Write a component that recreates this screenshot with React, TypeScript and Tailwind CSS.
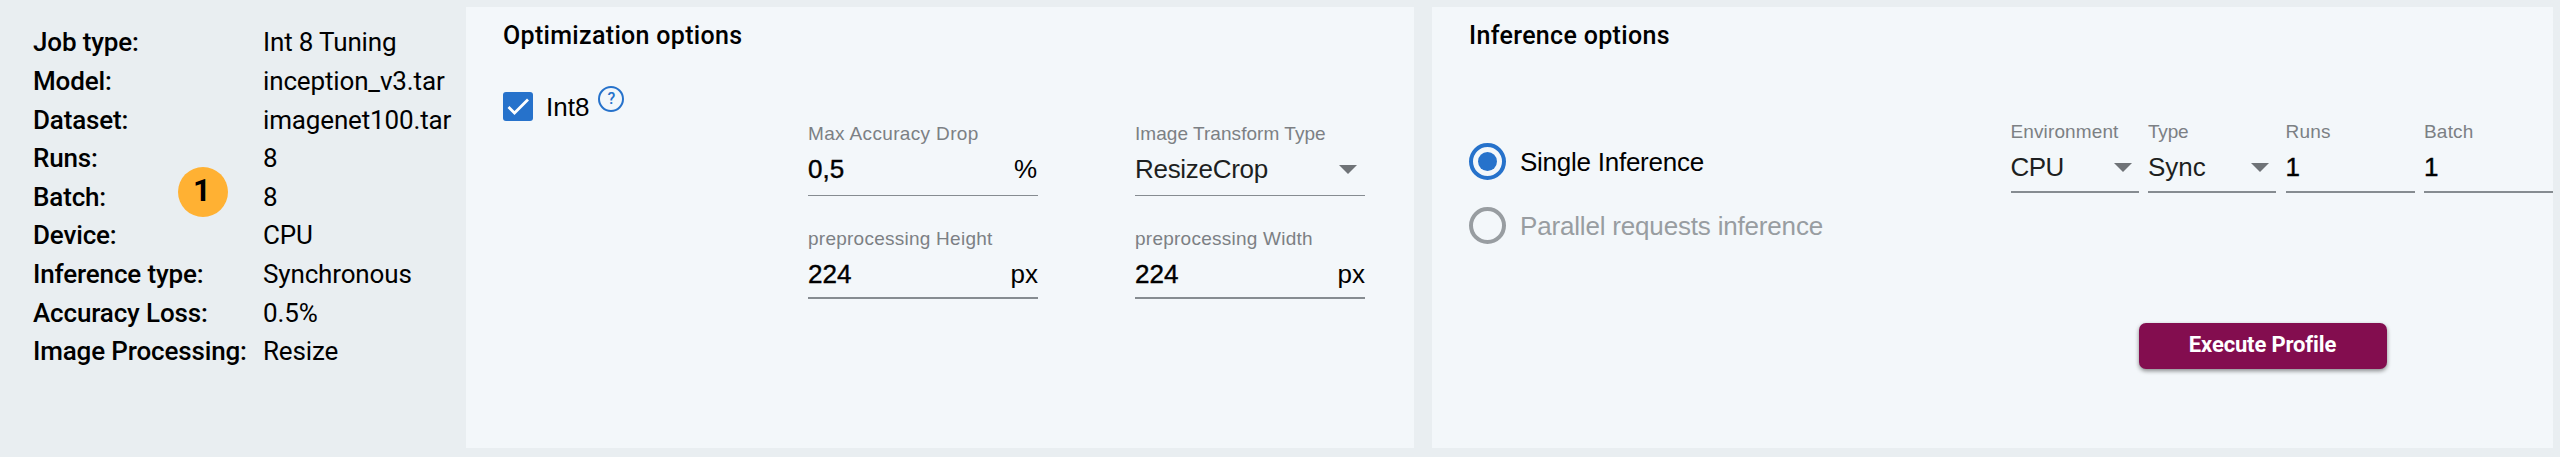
import React from "react";

const job: [string, string][] = [
  ["Job type:", "Int 8 Tuning"],
  ["Model:", "inception_v3.tar"],
  ["Dataset:", "imagenet100.tar"],
  ["Runs:", "8"],
  ["Batch:", "8"],
  ["Device:", "CPU"],
  ["Inference type:", "Synchronous"],
  ["Accuracy Loss:", "0.5%"],
  ["Image Processing:", "Resize"],
];

function Arrow({ className }: { className: string }) {
  return (
    <svg className={className} width="18" height="9" viewBox="0 0 18 9">
      <path d="M0 0H18L9 9Z" fill="#6f7377" />
    </svg>
  );
}

function Field({ label, value, suffix, select, className, labelClass, valueClass = "", suffixClass = "", arrow }: {
  label: string;
  value: string;
  suffix?: string;
  select?: boolean;
  className: string;
  labelClass: string;
  valueClass?: string;
  suffixClass?: string;
  arrow?: string;
}) {
  return (
    <label className={`flex flex-col border-[#868c91] ${className}`}>
      <span className={`h-6 whitespace-nowrap text-[19px] leading-6 text-[#7c8084] ${labelClass}`}>{label}</span>
      <span className={`mt-[8px] flex h-[30px] items-center justify-between text-[26px] leading-[30px] ${select ? "text-[#1d1f21]" : "text-black"}`}>
        <span className={`${select ? "" : "[-webkit-text-stroke:0.4px_black]"} ${valueClass}`}>{value}</span>
        {suffix && <span className={suffixClass}>{suffix}</span>}
        {select && <Arrow className={arrow ?? "mr-2"} />}
      </span>
    </label>
  );
}

export default function App() {
  return (
    <div className="flex h-[457px] w-[2560px] overflow-hidden bg-[#e9eef1] font-['Liberation_Sans',Arial,sans-serif] text-black">
      <aside className="relative w-[466px] shrink-0 pl-[33px] pt-[23.4px] font-[Roboto,sans-serif] text-[26px]">
        <dl>
          {job.map(([k, v]) => (
            <div key={k} className="flex h-[38.6px] items-center whitespace-nowrap leading-[38.6px]">
              <dt className="w-[230px] font-medium tracking-[-0.15px]">{k}</dt>
              <dd className="tracking-[-0.15px]">{v}</dd>
            </div>
          ))}
        </dl>
        <span className="absolute left-[178px] top-[167px] flex size-[50px] items-center justify-center rounded-full bg-[#ffb133] pb-px pr-[2px] text-[31px] font-bold">
          1
        </span>
      </aside>

      <section className="mt-[7px] h-[441px] w-[948px] shrink-0 bg-[#f3f7fa] pl-[37px] pt-[13px]">
        <h2 className="h-8 font-[Roboto,sans-serif] text-[25px] font-medium leading-8 tracking-[0.32px]">Optimization options</h2>
        <div className="flex">
          <div className="flex w-[305px] pt-[34px]">
            <span className="mt-[6px] flex h-[29px] w-[30px] items-center justify-center rounded-[3px] bg-[#2672cb]">
              <svg width="30" height="29" viewBox="0 0 30 29" fill="none">
                <path d="M5.5 15L11.5 21L25 7.5" stroke="white" strokeWidth="2.8" />
              </svg>
            </span>
            <span className="ml-[13px] mt-[6px] text-[26px] leading-[30px]">Int8</span>
            <span className="ml-[9px] flex size-[26px] items-center justify-center rounded-full border-2 border-[#2672cb] font-[Roboto,sans-serif] text-[16px] font-medium leading-none text-[#2672cb]">
              ?
            </span>
          </div>
          <div className="mt-[70px] grid grid-cols-[230px_230px] gap-x-[97px]">
            <Field label="Max Accuracy Drop" value="0,5" suffix="%" suffixClass="mr-px" className="h-[74px] border-b" labelClass="tracking-[0.35px]" />
            <Field label="Image Transform Type" value="ResizeCrop" select className="h-[74px] border-b" labelClass="tracking-[0.05px]" valueClass="tracking-[-0.3px]" />
            <Field label="preprocessing Height" value="224" suffix="px" className="mt-[31px] h-[72px] border-b-2" labelClass="tracking-[0.25px]" />
            <Field label="preprocessing Width" value="224" suffix="px" className="mt-[31px] h-[72px] border-b-2" labelClass="tracking-[0.25px]" />
          </div>
        </div>
      </section>

      <section className="ml-[18px] mt-[7px] h-[441px] w-[1121px] shrink-0 bg-[#f3f7fa] pl-[37px] pt-[13px]">
        <h2 className="h-8 font-[Roboto,sans-serif] text-[25px] font-medium leading-8 tracking-[0.32px]">Inference options</h2>
        <div className="flex">
          <div className="w-[542px] pt-[91px] text-[26px] leading-[38px]">
            <div className="flex h-[37px] gap-[14px]">
              <span className="flex size-[37px] items-center justify-center rounded-full border-4 border-[#2672cb]">
                <span className="size-[19px] rounded-full bg-[#2672cb]" />
              </span>
              <span className="tracking-[-0.25px]">Single Inference</span>
            </div>
            <div className="mt-[27px] flex h-[37px] gap-[14px] text-[#989da1]">
              <span className="size-[37px] rounded-full border-4 border-[#989da1]" />
              <span className="tracking-[-0.18px]">Parallel requests inference</span>
            </div>
          </div>
          <div>
            <div className="mt-[68px] grid grid-cols-[128px_128px_129px_129px] gap-x-[9.5px]">
              <Field label="Environment" value="CPU" select arrow="mr-[7px]" className="h-[73px] border-b-2" labelClass="tracking-[0.12px]" valueClass="tracking-[-0.5px]" />
              <Field label="Type" value="Sync" select arrow="mr-[7px]" className="h-[73px] border-b-2" labelClass="tracking-[-0.2px]" />
              <Field label="Runs" value="1" className="h-[73px] border-b-2" labelClass="tracking-[0.2px]" />
              <Field label="Batch" value="1" className="h-[73px] border-b-2" labelClass="tracking-[0.2px]" />
            </div>
            <button className="ml-[128px] mt-[130px] block h-[46px] w-[248px] rounded-[7px] bg-[#830d4f] pb-[3px] font-[Roboto,sans-serif] text-[22px] font-bold tracking-[-0.15px] text-white shadow-[0_2px_4px_rgba(0,0,0,0.45)]">
              Execute Profile
            </button>
          </div>
        </div>
      </section>
    </div>
  );
}
